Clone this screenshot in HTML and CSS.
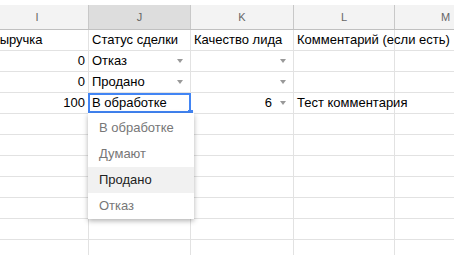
FILE: index.html
```html
<!DOCTYPE html>
<html lang="ru">
<head>
  <meta charset="UTF-8">
  <meta name="viewport" content="width=device-width, initial-scale=1">
  <title>Таблица сделок</title>
  <link rel="stylesheet" href="styles.css">
</head>
<body>

<div class="frame">
<div class="sheet">
  <div class="row head">
    <div class="hcell c-i">I</div>
    <div class="hcell c-j active">J</div>
    <div class="hcell c-k">K</div>
    <div class="hcell c-l">L</div>
    <div class="hcell c-m">M</div>
  </div>

  <div class="row">
    <div class="cell c-i clip">Выручка</div>
    <div class="cell c-j">Статус сделки</div>
    <div class="cell c-k">Качество лида</div>
    <div class="cell c-l nowrap">Комментарий (если есть)</div>
    <div class="cell c-m"></div>
  </div>

  <div class="row">
    <div class="cell c-i num">0</div>
    <div class="cell c-j dd"><span class="val">Отказ</span><span class="arrow"></span></div>
    <div class="cell c-k dd"><span class="val"></span><span class="arrow"></span></div>
    <div class="cell c-l"></div>
    <div class="cell c-m"></div>
  </div>

  <div class="row">
    <div class="cell c-i num">0</div>
    <div class="cell c-j dd"><span class="val">Продано</span><span class="arrow"></span></div>
    <div class="cell c-k dd"><span class="val"></span><span class="arrow"></span></div>
    <div class="cell c-l"></div>
    <div class="cell c-m"></div>
  </div>

  <div class="row">
    <div class="cell c-i num">100</div>
    <div class="cell c-j sel">
      <span class="val">В обработке</span>
      <div class="menu">
        <div class="item">В обработке</div>
        <div class="item">Думают</div>
        <div class="item hover">Продано</div>
        <div class="item">Отказ</div>
      </div>
    </div>
    <div class="cell c-k dd"><span class="val num">6</span><span class="arrow"></span></div>
    <div class="cell c-l">Тест комментария</div>
    <div class="cell c-m"></div>
  </div>

  <div class="row"><div class="cell c-i"></div><div class="cell c-j"></div><div class="cell c-k"></div><div class="cell c-l"></div><div class="cell c-m"></div></div>
  <div class="row"><div class="cell c-i"></div><div class="cell c-j"></div><div class="cell c-k"></div><div class="cell c-l"></div><div class="cell c-m"></div></div>
  <div class="row"><div class="cell c-i"></div><div class="cell c-j"></div><div class="cell c-k"></div><div class="cell c-l"></div><div class="cell c-m"></div></div>
  <div class="row"><div class="cell c-i"></div><div class="cell c-j"></div><div class="cell c-k"></div><div class="cell c-l"></div><div class="cell c-m"></div></div>
  <div class="row"><div class="cell c-i"></div><div class="cell c-j"></div><div class="cell c-k"></div><div class="cell c-l"></div><div class="cell c-m"></div></div>
  <div class="row"><div class="cell c-i"></div><div class="cell c-j"></div><div class="cell c-k"></div><div class="cell c-l"></div><div class="cell c-m"></div></div>
  <div class="row"><div class="cell c-i"></div><div class="cell c-j"></div><div class="cell c-k"></div><div class="cell c-l"></div><div class="cell c-m"></div></div>
</div>
</div>

</body>
</html>
```

FILE: styles.css
```css
body {
  margin: 0;
  background: #fff;
  font-family: "Liberation Sans", Arial, sans-serif;
  font-size: 13px;
  color: #000;
  overflow: hidden;
}
.frame {
  width: 454px;
  height: 255px;
  overflow: hidden;
}
.sheet {
  margin-top: 5px;
  margin-left: -14px;
}
.row {
  display: flex;
  height: 21px;
}
.head {
  height: 25px;
  background: #f3f3f3;
  border-bottom: 1px solid #c0c0c0;
  box-sizing: border-box;
}
.c-i { width: 103px; }
.c-j { width: 102px; }
.c-k { width: 103px; }
.c-l { width: 101px; }
.c-m { width: 102px; }
.hcell, .cell {
  flex: none;
  box-sizing: border-box;
}
.hcell {
  border-right: 1px solid #c8c8c8;
  color: #666;
  font-size: 11px;
  text-align: center;
  line-height: 24px;
}
.hcell.active {
  background: #dddddd;
}
.cell {
  border-right: 1px solid #e2e2e2;
  border-bottom: 1px solid #e2e2e2;
  padding: 0 3px;
  line-height: 20px;
  white-space: nowrap;
}
.cell.num {
  text-align: right;
}
.clip {
  overflow: hidden;
  text-indent: 2px;
}
.nowrap {
  overflow: visible;
}
.dd {
  display: flex;
  align-items: center;
}
.dd .val {
  flex: 1;
}
.dd .val.num {
  text-align: right;
  padding-right: 8px;
}
.arrow {
  width: 0;
  height: 0;
  margin-right: 4px;
  border-left: 3.5px solid transparent;
  border-right: 3.5px solid transparent;
  border-top: 4px solid #999;
}
.sel {
  position: relative;
}
.sel::after {
  content: "";
  position: absolute;
  top: 0;
  left: -1px;
  right: -1px;
  bottom: 0;
  border: 2px solid #4285f4;
  z-index: 2;
}
.sel::before {
  content: "";
  position: absolute;
  right: -3px;
  bottom: -2px;
  width: 5px;
  height: 5px;
  background: #4285f4;
  z-index: 3;
}
.menu {
  position: absolute;
  top: 100%;
  left: -1px;
  width: 106px;
  padding-top: 2px;
  background: #fff;
  box-shadow: 0 2px 5px rgba(0,0,0,0.3);
  z-index: 4;
}
.item {
  height: 26px;
  line-height: 26px;
  padding-left: 11px;
  font-size: 13px;
  color: #777;
}
.item.hover {
  background: #f1f1f1;
  color: #222;
}
```
